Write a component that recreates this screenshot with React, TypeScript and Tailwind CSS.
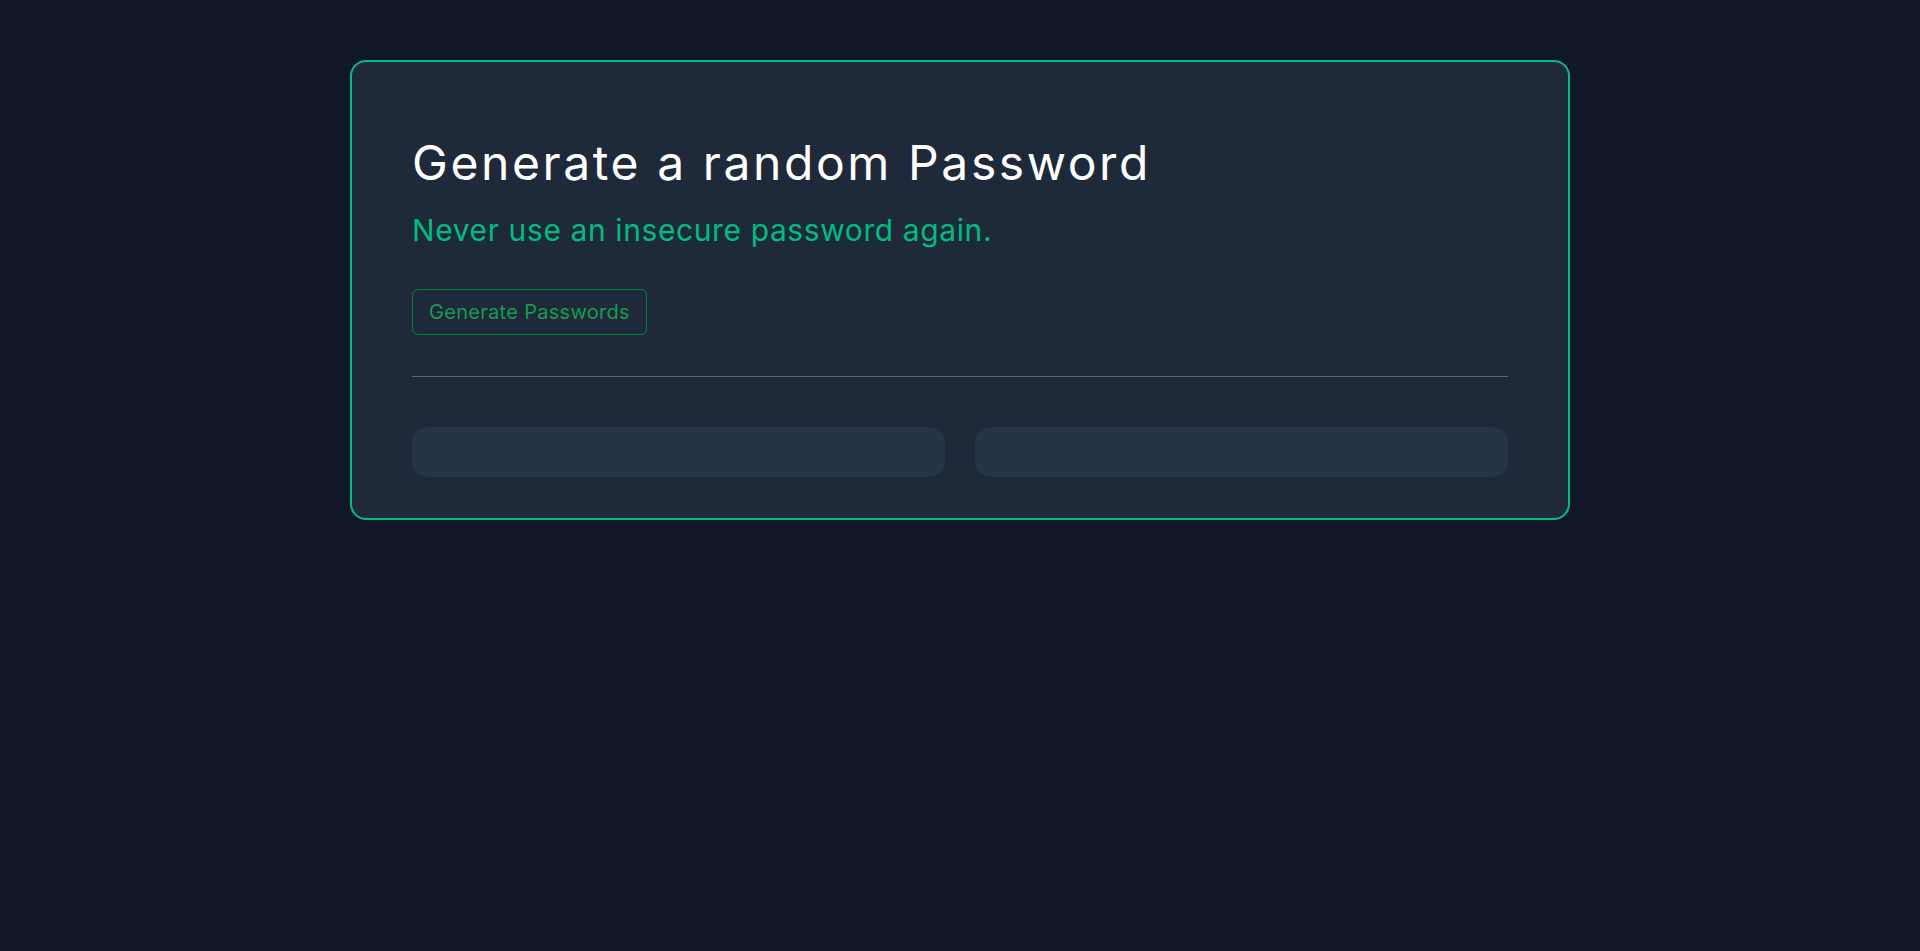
export default function App() {
  return (
    <div
      className="min-h-screen bg-gray-900 pt-[60px]"
      style={{ fontFamily: 'Inter, "Open Sans", sans-serif' }}
    >
      <div className="mx-auto w-[1220px] rounded-2xl border-2 border-emerald-500 bg-gray-800 px-[60px] pt-[60px] pb-[41px]">
        <h1 className="mt-[17px] text-5xl font-normal tracking-[0.054em] text-white">
          Generate a random Password
        </h1>
        <p className="mt-[25px] text-3xl tracking-[0.02em] text-emerald-500">
          Never use an insecure password again.
        </p>
        <button
          type="button"
          className="mt-[41px] rounded-md border border-green-700 px-4 py-2 text-xl tracking-[0.015em] text-[#179b4f] hover:bg-green-900/20"
        >
          Generate Passwords
        </button>
        <div className="mt-[41px] h-px bg-[#5b6370]" />
        <div className="mt-[50px] grid grid-cols-2 gap-[30px]">
          <div className="h-[50px] rounded-2xl bg-[#253446]" />
          <div className="h-[50px] rounded-2xl bg-[#253446]" />
        </div>
      </div>
    </div>
  );
}
